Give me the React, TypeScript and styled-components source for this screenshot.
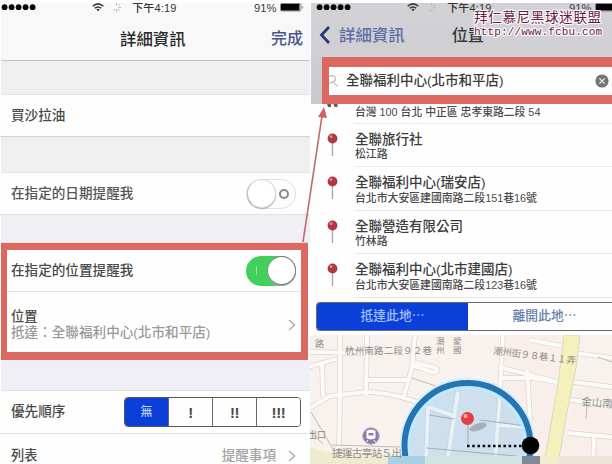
import React from "react";
import styled, { createGlobalStyle } from "styled-components";

const Global = createGlobalStyle`
  * { box-sizing: border-box; }
  html, body { margin: 0; padding: 0; background: #fefefe; }
  body { font-family: "Liberation Sans", "Noto Sans CJK TC", sans-serif; overflow: hidden; }
  svg { display: block; flex: none; }
`;

const RED = "#dc6961";

const Page = styled.div`
  position: relative;
  display: flex;
  width: 612px;
  height: 464px;
  padding-top: 3px;
  overflow: hidden;
  background: #fefefe;
`;

const Text = styled.span<{ $size?: number; $color?: string; $weight?: number; $gap?: number }>`
  display: block;
  white-space: nowrap;
  line-height: 16px;
  font-size: ${(p) => p.$size ?? 13.6}px;
  color: ${(p) => p.$color ?? "#4a4a4a"};
  font-weight: ${(p) => p.$weight ?? 500};
  letter-spacing: ${(p) => p.$gap ?? 0}px;
`;

const Phone = styled.section<{ $width: number }>`
  width: ${(p) => p.$width}px;
  height: 461px;
  flex: none;
  display: flex;
  flex-direction: column;
  overflow: hidden;
`;

const StatusBar = styled.div`
  height: 9px;
  flex: none;
  display: flex;
  align-items: center;
`;

const NavBar = styled.header`
  height: 58px;
  flex: none;
  margin-left: 1px;
  background: #f8f8f9;
  border-bottom: 1px solid #c5c5c8;
`;

const TitleRow = styled.div<{ $pad: string }>`
  display: flex;
  align-items: center;
  justify-content: space-between;
  height: 30px;
  margin-top: 12px;
  padding: ${(p) => p.$pad};
`;

const Gap = styled.div<{ $h: number; $tint?: string }>`
  height: ${(p) => p.$h}px;
  flex: none;
  margin-left: 1px;
  background: ${(p) => p.$tint ?? "#efeff0"};
  border-bottom: 1px solid #e4e4e6;
`;

const Row = styled.div<{ $h: number; $pad?: string; $line?: string }>`
  height: ${(p) => p.$h}px;
  flex: none;
  display: flex;
  align-items: center;
  justify-content: space-between;
  padding: ${(p) => p.$pad ?? "0 14px 0 11px"};
  border-bottom: 1px solid ${(p) => p.$line ?? "#e2e2e4"};
  background: #fefefe;
`;

const Highlight = styled.div`
  height: 117px;
  flex: none;
  margin: 0 2px 0 1px;
  border: 7px solid ${RED};
  border-width: 7px 7px 8px 6px;
  display: flex;
  flex-direction: column;
  background: #fefefe;
`;

const Toggle = styled.div<{ $on?: boolean }>`
  display: flex;
  align-items: center;
  justify-content: space-between;
  width: 50px;
  height: 30px;
  border-radius: 15px;
  padding: 0 ${(p) => (p.$on ? "0 0 10px" : "6px 0 0")};
  background: ${(p) => (p.$on ? "#43cf5b" : "#fdfdfd")};
  border: ${(p) => (p.$on ? "0" : "1px solid #e0e0e0")};
`;

const Knob = styled.i<{ $on?: boolean }>`
  width: 29px;
  height: 29px;
  border-radius: 50%;
  background: #fff;
  border: 1px solid ${(p) => (p.$on ? "#777b7d" : "#dadada")};
  border-left-color: ${(p) => (p.$on ? "#52a864" : "#c2c2c2")};
  box-shadow: 0 1px 1px #aaa;
`;

const OnMark = styled.i`
  width: 1px;
  height: 9px;
  background: #8bed98;
`;

const OffMark = styled.i`
  width: 10px;
  height: 10px;
  border: 2px solid #888;
  border-radius: 50%;
`;

const Priority = styled.div`
  display: flex;
  width: 177px;
  height: 30px;
  border: 1px solid #55575c;
  border-radius: 4px;
  overflow: hidden;
`;

const PriorityItem = styled.div<{ $active?: boolean }>`
  flex: 1;
  display: flex;
  align-items: center;
  justify-content: center;
  font-size: 15px;
  font-weight: 700;
  letter-spacing: -0.4px;
  color: #4a4a4a;
  background: ${(p) => (p.$active ? "#0b40d8" : "#fefefe")};
  & + & { border-left: 1px solid #66686c; }
`;

const Inline = styled.div<{ $gap: number }>`
  display: flex;
  align-items: center;
  gap: ${(p) => p.$gap}px;
`;

const SearchNav = styled.header`
  height: 101px;
  flex: none;
  margin-left: 1px;
  background: linear-gradient(#d2d2d6, #cfcfd4 48px, #c9c9cc);
  display: flex;
  flex-direction: column;
`;

const SearchFrame = styled.div`
  margin: 12px 0 0 11px;
  height: 47px;
  flex: none;
  border: solid ${RED};
  border-width: 10px 0 9px 7px;
  background: #fefefe;
  display: flex;
  align-items: center;
  padding-right: 3px;
`;

const ClearSlot = styled.div`
  margin-left: auto;
  padding-right: 0.5px;
`;

const Results = styled.div`
  height: 194px;
  flex: none;
  background: #fefefe;
`;

const Result = styled.div`
  display: flex;
  height: 43.5px;
  padding-left: 17px;
`;

const ResultBody = styled.div`
  flex: 1;
  margin-left: 17px;
  padding-top: 8px;
  border-bottom: 1px solid #e8e8e8;
`;

const AddressLine = styled.div`
  margin-top: -1.5px;
`;

const FirstResult = styled.div`
  display: flex;
  height: 19.5px;
  padding-left: 17px;
`;

const FirstBody = styled.div`
  flex: 1;
  margin-left: 17px;
  border-bottom: 1px solid #e8e8e8;
`;

const TabsWrap = styled.div`
  padding-top: 3.5px;
  height: 37px;
  flex: none;
  background: #fefefe;
`;

const Tabs = styled.div`
  display: flex;
  height: 29px;
  flex: none;
  margin: 0 0 4px 6px;
  border: 1px solid #676b73;
  border-right: 0;
  border-radius: 4px 0 0 4px;
  overflow: hidden;
`;

const Tab = styled.div<{ $active?: boolean; $w: number }>`
  width: ${(p) => p.$w}px;
  flex: none;
  display: flex;
  align-items: center;
  justify-content: center;
  background: ${(p) => (p.$active ? "#0a3fd8" : "#fefefe")};
`;

const ArrowLayer = styled.svg`
  position: absolute;
  left: 296px;
  top: 104px;
`;

const Watermark = styled.div`
  position: absolute;
  left: 474px;
  top: 7px;
  color: #6a163d;
  text-shadow: 1px 0 #fff, -1px 0 #fff, 0 1px #fff, 0 -1px #fff, 1px 1px #fff, -1px -1px #fff,
    1px -1px #fff, -1px 1px #fff;
  white-space: nowrap;
`;

const MarkName = styled.div`
  font: 13.5px/18px "Noto Sans CJK SC", sans-serif;
  letter-spacing: 0.7px;
`;

const MarkUrl = styled.div`
  font: 11px/14px "Liberation Mono", monospace;
  letter-spacing: 0.15px;
`;

const StatusLeft = styled.div<{ $pad: number }>`
  display: flex;
  align-items: center;
  padding-left: ${(p) => p.$pad}px;
  width: ${(p) => 91 + p.$pad}px;
  flex: none;
`;

const StatusTime = styled.div<{ $w: number }>`
  display: flex;
  align-items: center;
  gap: 8px;
  width: ${(p) => p.$w}px;
  flex: none;
`;

const Signal = () => (
  <svg width="35" height="9" viewBox="0 0 35 9">
    {[0, 1, 2, 3, 4].map((i) => (
      <circle key={i} cx={3.6 + i * 7} cy="4.2" r="2.9" fill="#080808" />
    ))}
  </svg>
);

const Wifi = () => (
  <svg width="12" height="9" viewBox="0 0 12 9" fill="none" stroke="#333" strokeWidth="1.5">
    <path d="M.7 3.2Q6-1.4 11.3 3.2M2.8 5.3Q6 2.6 9.2 5.3" />
    <path d="M4.3 6.4Q6 5 7.7 6.4L6 8.3Z" fill="#333" stroke="none" />
  </svg>
);

const Spinner = () => (
  <svg width="9" height="9" viewBox="0 0 9 9" stroke="#b8b8ba" strokeWidth="1">
    <path d="M4.5 0v2.5M7.7 1.3 6 3M9 4.5H6.5M7.7 7.7 6 6M4.5 9V6.5M1.3 7.7 3 6" />
  </svg>
);

const Battery = () => (
  <svg width="24" height="9" viewBox="0 0 24 9">
    <rect x=".5" y=".5" width="20.5" height="7.5" rx="1.2" fill="#f6f6f6" stroke="#888" />
    <rect x="1" y="1" width="18.5" height="6.5" fill="#050505" />
    <path d="M22.5 2.5Q24 4.2 22.5 6Z" fill="#555" />
  </svg>
);

const Status = ({ pad, timeWidth }: { pad: number; timeWidth: number }) => (
  <StatusBar>
    <StatusLeft $pad={pad}><Signal /></StatusLeft>
    <StatusTime $w={timeWidth}>
      <Wifi />
      <Spinner />
      <Text $size={11} $color="#333" $gap={0.15}>&nbsp;下午4:19</Text>
    </StatusTime>
    <Inline $gap={4}>
      <Text $size={11.2} $color="#3c3c3c">91%</Text>
      <Battery />
    </Inline>
  </StatusBar>
);

const Chevron = () => (
  <svg width="8" height="12" viewBox="0 0 8 12" fill="none" stroke="#b0b0b0" strokeWidth="1.6">
    <path d="m1 1 5.5 5L1 11" />
  </svg>
);

const Pin = () => (
  <svg width="11" height="34" viewBox="0 0 11 34">
    <path d="M5.500 14v18" stroke="#aaa" strokeWidth="1.4" />
    <circle cx="5.5" cy="14.5" r="4.9" fill="#ae3843" />
    <circle cx="4" cy="12.6" r="1.5" fill="#e2868c" />
  </svg>
);

const PinFeet = () => (
  <svg width="11" height="8" viewBox="0 0 11 8">
    <path d="M0 0h4v3H1zM6.5 0h4v3h-3z" fill="#635b5b" />
  </svg>
);

const SearchGlass = () => (
  <svg width="17" height="13" viewBox="0 0 17 13" fill="none" stroke="#b5b0b0" strokeWidth="1.1">
    <path d="M0 1.5Q5.500-1 6.500 3.500 6.500 7.500 0 8M5 7.500l3.500 4" />
  </svg>
);

const ClearIcon = () => (
  <svg width="14" height="14" viewBox="0 0 14 14">
    <circle cx="7" cy="7" r="6.6" fill="#757575" />
    <path d="m4.4 4.4 5.2 5.200m0-5.200-5.200 5.200" stroke="#eee" strokeWidth="1.300" />
  </svg>
);

const ROADS =
  "M340 335v58l-1 53-5 7M367 335l-1 60M310 408l20-12 36-4q34 1 64 16l23 8M415 335l-3 33-9 31M308 367l28-8M322 364l1 33M366 380h43M413 362l23 6q4 5-4 4l-18-6M310 352l55 1M428 407l-2 56M458 386l-11 73M503 335l-7 127M499 367l58 15M502 378h30l25 4M527 370l3 48-18 2M496 425l35 3M530 340l32 6M574 382l38 5M571 400l41 4M568 433l44 4M576 353l36 5M594 435l-1 29";

const MapView = () => (
  <svg width="302" height="129" viewBox="310 335 302 129">
    <rect x="310" y="335" width="302" height="129" fill="#f7f2ed" />
    <path d="M502 335h60l-16 129h-44zM580 380l32 3v81h-55z" fill="#f8efeb" />
    <path d="M310 447l18 5 72 3v9h-90z" fill="#f1edc9" />
    <path d={ROADS} fill="none" stroke="#dad5d1" strokeWidth="5.300" />
    <path d={ROADS} fill="none" stroke="#fcfaf7" strokeWidth="3.900" />
    <path d="M564 335h16l-4 33-9 44-9 52h-14l14-80z" fill="#f4f1bd" stroke="#ddd8b5" />
    <path d="M311 412l22 37M311 432l12 12M332 445l68 2M412 378l24 8M587 405l-1 14M598 357l14 5" fill="none" stroke="#c3bcae" />
    <circle cx="467.5" cy="446" r="60" fill="#b4d3ee" fillOpacity=".62" />
    <path d="M428 407l-2 56M458 392l-11 72M500 395l-5 67M429 407l25 9M498 425l27 2" fill="none" stroke="#e9f1f7" strokeWidth="3.500" />
    <path d="M468 425v21M480 420l46 6M429 415l25 4M426 448l90 8" fill="none" stroke="#a3afb8" strokeWidth="1" />
    <circle cx="467.5" cy="446" r="58.5" fill="none" stroke="#bcecff" strokeWidth="3" />
    <circle cx="467.5" cy="446" r="67" fill="none" stroke="#d3f1fb" strokeWidth="2" />
    <circle cx="467.5" cy="446" r="63" fill="none" stroke="#2775b0" strokeWidth="6" />
    <ellipse cx="478" cy="427" rx="9" ry="3.5" fill="#77818b" opacity=".5" transform="rotate(-20 478 427)" />
    <circle cx="467.5" cy="418.5" r="6.5" fill="#e33e42" />
    <circle cx="465.5" cy="416" r="2" fill="#ffaaa6" />
    <path d="M467 446h56" stroke="#111" strokeWidth="2.600" strokeDasharray="2.600 2.600" />
    <path d="M310 456h78v8h-78z" fill="#eeebd0" />
    <path d="M388 456h37v8h-37z" fill="#a9cfe2" />
    <path d="M425 456h97v8h-97z" fill="#cfe4e3" />
    <path d="M522 456h18v8h-18z" fill="#7f8a99" />
    <path d="M540 456h20l-2 8h-18z" fill="#f2eecb" />
    <path d="M560 456h52v8h-54z" fill="#efe4da" />
    <circle cx="530.5" cy="445.5" r="8.8" fill="#020202" />
    <circle cx="371" cy="436" r="8.3" fill="#8a7cae" stroke="#b8adc9" />
    <path d="M367 431q4-2 8 0v7q-4 2-8 0zM368 440l-1.500 2M374 440l1.500 2" fill="#fff" stroke="#fff" />
    <path d="M368.500 433h5v2.500h-5z" fill="#8a7cae" />
    <g fill="#8f8b88" fontFamily='"Noto Sans CJK TC", sans-serif' fontSize="9.500">
      <text x="345" y="354" textLength="87">杭州南路二段９２巷</text>
      <text x="493" y="354" textLength="83" transform="rotate(7 493 354)">潮州街９８巷１１弄</text>
      <text x="581" y="405" fontSize="10.500" transform="rotate(5 581 405)">金山南路</text>
      <text x="332" y="457" fontSize="10.500" textLength="70">捷運古亭站５出</text>
      <text x="436" y="344" fontSize="8.500">潮</text>
      <text x="436" y="353" fontSize="8.500">州</text>
      <text x="453" y="344" fontSize="8.500">愛</text>
      <text x="453" y="353" fontSize="8.500">國</text>
      <text x="315" y="347" fontSize="9">路</text>
      <text x="308" y="438" fontSize="9">出口</text>
    </g>
  </svg>
);

const results = [
  { name: "全聯旅行社", address: "松江路" },
  { name: "全聯福利中心(瑞安店)", address: "台北市大安區建國南路二段151巷16號" },
  { name: "全聯營造有限公司", address: "竹林路" },
  { name: "全聯福利中心(北市建國店)", address: "台北市大安區建國南路二段123巷16號" },
];

export default function App() {
  return (
    <Page>
      <Global />
      <Phone $width={310}>
        <NavBar>
          <Status pad={0} timeWidth={162} />
          <TitleRow $pad="0 7px 0 119px">
            <Text $size={16.4} $color="#2b2b2b">詳細資訊</Text>
            <Text $size={16} $color="#4a5688">完成</Text>
          </TitleRow>
        </NavBar>
        <Gap $h={34} />
        <Row $h={42} $line="#d3d3d5"><Text>買沙拉油</Text></Row>
        <Gap $h={36} />
        <Row $h={42}>
          <Text $color="#565656">在指定的日期提醒我</Text>
          <Toggle><Knob /><OffMark /></Toggle>
        </Row>
        <Gap $h={28} $tint="#f0f0f4" />
        <Highlight>
          <Row $h={42} $pad="0 5px 0 4px">
            <Text>在指定的位置提醒我</Text>
            <Toggle $on><OnMark /><Knob $on /></Toggle>
          </Row>
          <Row $h={60} $pad="7px 5px 0 4px" $line="#fefefe">
            <div>
              <Text $size={13.2}>位置</Text>
              <Text $color="#9a9a9a">抵達：全聯福利中心(北市和平店)</Text>
            </div>
            <Chevron />
          </Row>
        </Highlight>
        <Gap $h={31} $tint="#efeff5" />
        <Row $h={43} $pad="0 9px 0 11px">
          <Text>優先順序</Text>
          <Priority>
            <PriorityItem $active><Text $size={12} $color="#b3ccff">無</Text></PriorityItem>
            <PriorityItem>!</PriorityItem>
            <PriorityItem>!!</PriorityItem>
            <PriorityItem>!!!</PriorityItem>
          </Priority>
        </Row>
        <Row $h={44} $line="#fefefe">
          <Text $size={13.2}>列表</Text>
          <Inline $gap={12}>
            <Text $color="#a3a3a3">提醒事項</Text>
            <Chevron />
          </Inline>
        </Row>
      </Phone>

      <Phone $width={302}>
        <SearchNav>
          <Status pad={5} timeWidth={162} />
          <TitleRow $pad="0 128px 0 8px">
            <Inline $gap={8}>
              <svg width="12" height="18" viewBox="0 0 12 18" fill="none" stroke="#273978" strokeWidth="2.800">
                <path d="m10 1-7.500 8L10 17" />
              </svg>
              <Text $size={16.4} $color="#616fa5">詳細資訊</Text>
            </Inline>
            <Text $size={16.2} $color="#38383c">位置</Text>
          </TitleRow>
          <SearchFrame>
            <SearchGlass />
            <Text $size={13.5} $color="#3a3a3a">全聯福利中心(北市和平店)</Text>
            <ClearSlot><ClearIcon /></ClearSlot>
          </SearchFrame>
        </SearchNav>
        <Results>
          <FirstResult>
            <PinFeet />
            <FirstBody><Text $size={10.8}>台灣 100 台北 中正區 忠孝東路二段 54</Text></FirstBody>
          </FirstResult>
          {results.map((r) => (
            <Result key={r.name}>
              <Pin />
              <ResultBody>
                <Text $size={13.5} $color="#3c3c3c">{r.name}</Text>
                <AddressLine><Text $size={10.85}>{r.address}</Text></AddressLine>
              </ResultBody>
            </Result>
          ))}
        </Results>
        <TabsWrap>
          <Tabs>
            <Tab $active $w={151}><Text $size={12.8} $color="#a3c0ff">抵達此地⋯</Text></Tab>
            <Tab $w={153}><Text $size={12.8} $color="#6480aa">離開此地⋯</Text></Tab>
          </Tabs>
        </TabsWrap>
        <MapView />
      </Phone>

      <ArrowLayer width="36" height="142" viewBox="296 104 36 142">
        <path d="M303 242 322 116" stroke="#c0686b" strokeWidth="1.6" />
        <path d="m324 107 3 11-9-1z" fill="#d0605f" />
      </ArrowLayer>
      <Watermark>
        <MarkName>拜仁慕尼黑球迷联盟</MarkName>
        <MarkUrl>http://www.fcbu.com</MarkUrl>
      </Watermark>
    </Page>
  );
}
